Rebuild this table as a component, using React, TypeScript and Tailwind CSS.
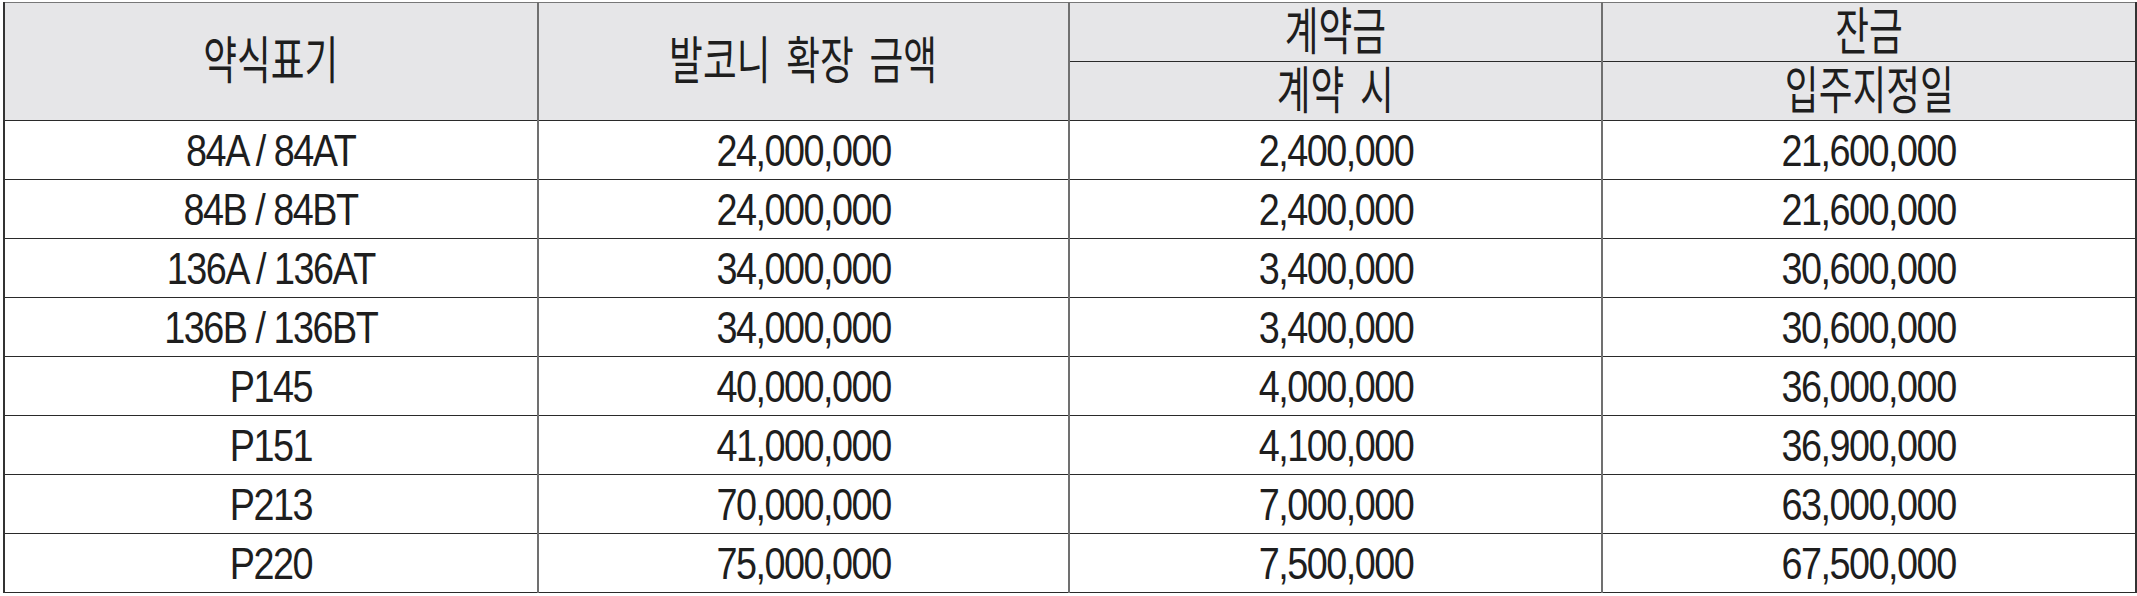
import React from "react";

const rows: [string, string, string, string][] = [
  ["84A / 84AT", "24,000,000", "2,400,000", "21,600,000"],
  ["84B / 84BT", "24,000,000", "2,400,000", "21,600,000"],
  ["136A / 136AT", "34,000,000", "3,400,000", "30,600,000"],
  ["136B / 136BT", "34,000,000", "3,400,000", "30,600,000"],
  ["P145", "40,000,000", "4,000,000", "36,000,000"],
  ["P151", "41,000,000", "4,100,000", "36,900,000"],
  ["P213", "70,000,000", "7,000,000", "63,000,000"],
  ["P220", "75,000,000", "7,500,000", "67,500,000"],
];

function T({ children }: { children: React.ReactNode }) {
  return (
    <span className="inline-block scale-x-[0.84] whitespace-nowrap text-[45px] tracking-[-0.04em]">
      {children}
    </span>
  );
}

function K({ children }: { children: React.ReactNode }) {
  return (
    <span className="inline-block scale-x-[0.72] whitespace-nowrap text-[51px] [word-spacing:0.15em]">
      {children}
    </span>
  );
}

export default function App() {
  const cell =
    "border-y border-y-[#2a2a2a] border-x-2 border-x-[#707070] p-0 text-center align-middle first:border-l-[#333] last:border-r-[#333]";
  return (
    <div className="bg-white w-[2137px] h-[596px] pt-[2px] pl-[3px]">
      <table
        className="table-fixed border-collapse w-[2132px] text-[#1e1e1e] leading-none"
        style={{ fontFamily: '"Liberation Sans", "Noto Sans CJK KR", sans-serif' }}
      >
        <colgroup>
          <col className="w-[534px]" />
          <col className="w-[531px]" />
          <col className="w-[533px]" />
          <col className="w-[534px]" />
        </colgroup>
        <thead>
          <tr className="h-[59px] bg-[#e6e6e8]">
            <th rowSpan={2} className={cell + " font-normal border-t-[#777]"}>
              <K>약식표기</K>
            </th>
            <th rowSpan={2} className={cell + " font-normal border-t-[#777]"}>
              <K>발코니 확장 금액</K>
            </th>
            <th className={cell + " font-normal border-t-[#777]"}>
              <K>계약금</K>
            </th>
            <th className={cell + " font-normal border-t-[#777]"}>
              <K>잔금</K>
            </th>
          </tr>
          <tr className="h-[59px] bg-[#e6e6e8]">
            <th className={cell + " font-normal"}>
              <K>계약 시</K>
            </th>
            <th className={cell + " font-normal"}>
              <K>입주지정일</K>
            </th>
          </tr>
        </thead>
        <tbody>
          {rows.map((r, i) => (
            <tr key={i} className="h-[59px] bg-white">
              {r.map((c, j) => (
                <td key={j} className={cell}>
                  <T>{c}</T>
                </td>
              ))}
            </tr>
          ))}
        </tbody>
      </table>
    </div>
  );
}
